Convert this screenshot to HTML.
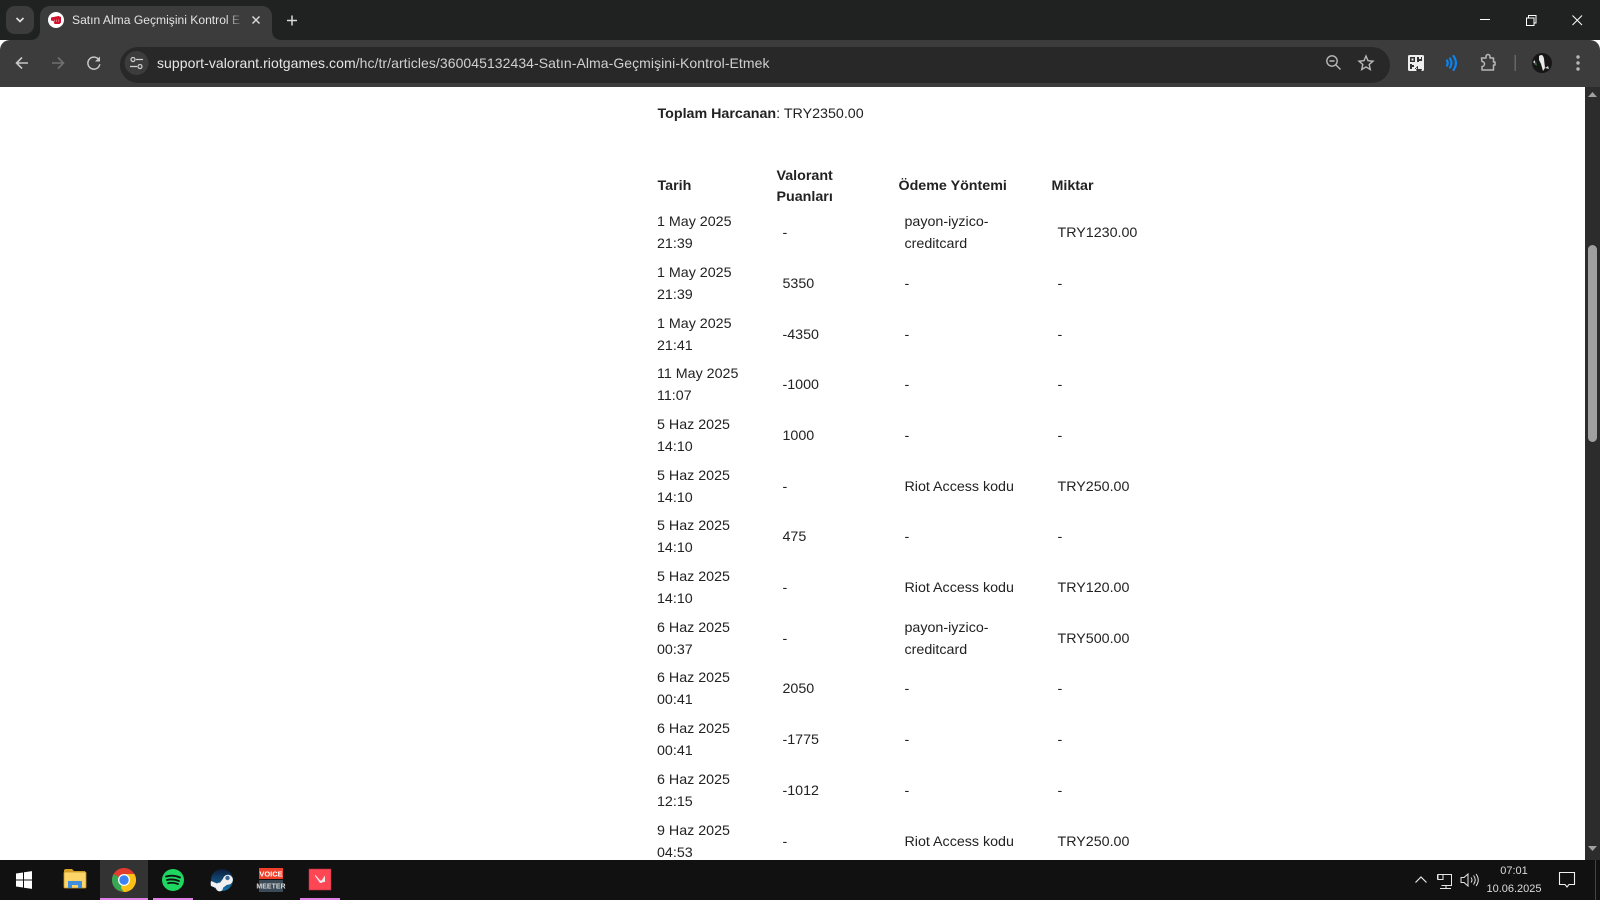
<!DOCTYPE html>
<html lang="tr"><head><meta charset="utf-8"><title>Satın Alma Geçmişini Kontrol Etmek</title>
<style>
html,body{margin:0;padding:0;width:1600px;height:900px;overflow:hidden;background:#fff;font-family:"Liberation Sans",sans-serif}
#top{position:absolute;left:0;top:0;width:1600px;height:40px;background:#202222}
#toolbar{position:absolute;left:0;top:40px;width:1600px;height:47px;background:#3c3c3c;border-radius:10px 10px 0 0}
#omni{position:absolute;left:120px;top:47px;width:1270px;height:36px;border-radius:18px;background:#282828}
#tab{position:absolute;left:40px;top:6px;width:232px;height:40px;background:#3c3c3c;border-radius:10px 10px 0 0}
#chev{position:absolute;left:6px;top:6px;width:28px;height:28px;border-radius:9px;background:#3c3c3c}
.t{position:absolute;white-space:nowrap}
#title{left:72px;top:12px;width:168px;overflow:hidden;font-size:12.1px;line-height:17px;color:#e3e3e3}
#fade{position:absolute;left:226px;top:10px;width:18px;height:20px;background:linear-gradient(90deg,rgba(60,60,60,0),#3c3c3c)}
#url{left:157px;top:53px;font-size:14px;line-height:20px;color:#e6e6e6;letter-spacing:.06px}
#url span{color:#d0d0d0}
#page{position:absolute;left:0;top:87px;width:1585px;height:773px;background:#fff;overflow:hidden}
#content{position:absolute;left:0;top:-85px;width:1585px;height:900px;font-size:14.28px;line-height:21.6px;color:#222}
.r{position:absolute;left:0;width:1585px;height:44px}
.r>div{position:absolute;white-space:nowrap}
.a{left:657px;top:0}.b{left:782.5px;top:11px}.c{left:904.5px;top:11px}.c2{left:904.5px;top:0}.d{left:1057.5px;top:11px}
.h{position:absolute;font-weight:700;white-space:nowrap}
#sb{position:absolute;left:1585px;top:87px;width:15px;height:773px;background:#2c2c2c}
#thumb{position:absolute;left:3px;top:158px;width:9px;height:197px;border-radius:5px;background:#a0a0a0}
#task{position:absolute;left:0;top:860px;width:1600px;height:40px;background:#111}
.ul{position:absolute;top:38px;height:2px;background:#e080e8}
#clock{position:absolute;left:1474px;top:2px;width:80px;text-align:center;font-size:11px;line-height:18px;color:#dcdcdc}
svg{position:absolute;overflow:visible}
</style></head><body>
<div id="top"></div>
<div id="chev"></div>
<svg style="left:0;top:0" width="40" height="40"><path d="M16.5 18l3.5 3.5 3.5-3.5" fill="none" stroke="#e3e3e3" stroke-width="1.6"/></svg>
<div id="tab"></div>
<div id="toolbar"></div>
<svg style="left:0;top:0" width="300" height="48"><path d="M30 40q10 0 10-10v10zM272 30q0 10 10 10h-10z" fill="#3c3c3c"/></svg>
<div id="omni"></div>
<svg style="left:48px;top:12px" width="16" height="16"><circle cx="8" cy="8" r="8" fill="#fff"/><path d="M3 5.500l7.500-1.500 2.500 1v5.500l-1.500 1.500h-5l-1-3-2.500-.5z" fill="#d0122c"/><path d="M6.500 7.500v2.500M8.500 7.500v2.500M10.500 7.500v2.500" stroke="#f4b8c0" stroke-width=".5"/></svg>
<div class="t" id="title">Satın Alma Geçmişini Kontrol Etmek</div><div id="fade"></div>
<svg style="left:0;top:0" width="320" height="40"><path d="M252.500 16.500l7 7M259.500 16.500l-7 7" stroke="#d8d8d8" stroke-width="1.500"/><path d="M292 15.500v10M287 20.500h10" stroke="#d8d8d8" stroke-width="1.500"/></svg>
<!-- window controls -->
<svg style="left:1470px;top:0" width="130" height="40"><path d="M10 19.500h10" stroke="#fff" stroke-width="1"/><path d="M56.500 18h7.500v7.500h-7.500zM58.500 18v-2.500h7.500v7.500h-2" fill="none" stroke="#fff" stroke-width="1"/><path d="M102.500 15.500l9.500 9.500M112 15.500l-9.500 9.500" stroke="#fff" stroke-width="1"/></svg>
<!-- nav -->
<svg style="left:0;top:40px" width="160" height="47">
<path d="M28 23H17M22 17.500L16.500 23l5.500 5.500" fill="none" stroke="#c7c7c7" stroke-width="1.600"/>
<path d="M52 23h11M58 17.500l5.500 5.500-5.500 5.500" fill="none" stroke="#707070" stroke-width="1.600"/>
<path d="M99 20a6 6 0 1 0 .8 4.200" fill="none" stroke="#c7c7c7" stroke-width="1.500"/><path d="M100 16.500v5h-5z" fill="#c7c7c7"/>
<circle cx="136.500" cy="23" r="12" fill="#3c3c3c"/>
<circle cx="133" cy="19.500" r="2" fill="none" stroke="#d0d0d0" stroke-width="1.200"/><path d="M136 19.500h7M130 26.500h7" stroke="#d0d0d0" stroke-width="1.200"/><circle cx="140" cy="26.500" r="2" fill="none" stroke="#d0d0d0" stroke-width="1.200"/>
</svg>
<div class="t" id="url">support-valorant.riotgames.com<span>/hc/tr/articles/360045132434-Satın-Alma-Geçmişini-Kontrol-Etmek</span></div>
<!-- toolbar right -->
<svg style="left:1320px;top:40px" width="280" height="47">
<circle cx="12" cy="21" r="5.200" fill="none" stroke="#b8b8b8" stroke-width="1.400"/><path d="M9.500 21h5M16 25l4.500 4.500" stroke="#b8b8b8" stroke-width="1.400"/>
<path d="M46 16l2 4.700 5 .5-3.800 3.300 1.100 5-4.300-2.600-4.300 2.600 1.100-5-3.800-3.300 5-.5z" fill="none" stroke="#b8b8b8" stroke-width="1.400"/>
<rect x="88" y="15" width="16" height="16" rx="1.500" fill="#eee"/>
<path d="M90 17h5v5h-5zM91.500 18.500h2v2h-2zM97 17h2v2h2v-2h1v4h-3v1h-2zM90 24h2v1h2v2h-2v2h-2zM95 28h2v1h-2zM98 26a3 3 0 1 0 4 3h-4z" fill="#333" fill-rule="evenodd"/>
<path d="M127 20.500q1.500 2.500 0 5M130 18.500q3 4.500 0 9M133.500 16q4.800 7 0 14" fill="none" stroke="#0a84f0" stroke-width="2.200" stroke-linecap="round"/>
<path d="M161.500 18h4.500v-1.500a2 2 0 0 1 4 0V18h3.500v4h1.500v3h-1.500v5h-11.500v-3.500a2.500 2.500 0 0 0 0-5z" fill="none" stroke="#b8b8b8" stroke-width="1.500" stroke-linejoin="round"/>
<rect x="194.500" y="15" width="1.500" height="16" fill="#666"/>
<circle cx="222" cy="23" r="10" fill="#161616"/><path d="M219 16q4-3 5 3l1 9-2 3-2-7-2-4z" fill="#e8e8e8"/><path d="M213 22l2-2v4zM225 28l3-2 1 3z" fill="#d0d0d0"/><path d="M214 24l2-3 1 5z" fill="#3a6a3a"/>
<circle cx="258" cy="17" r="1.700" fill="#b8b8b8"/><circle cx="258" cy="23" r="1.700" fill="#b8b8b8"/><circle cx="258" cy="29" r="1.700" fill="#b8b8b8"/>
</svg>
<!-- page -->
<div id="page"><div id="content">
<div class="h" style="left:657.5px;top:101.500px">Toplam Harcanan<span style="font-weight:400">: TRY2350.00</span></div>
<div class="h" style="left:657.500px;top:174px">Tarih</div>
<div class="h" style="left:776.500px;top:164px;line-height:21px">Valorant<br>Puanları</div>
<div class="h" style="left:898.500px;top:174px">Ödeme Yöntemi</div>
<div class="h" style="left:1051.500px;top:174px">Miktar</div>
<div class="r" style="top:210px"><div class="a">1 May 2025<br>21:39</div><div class="b">-</div><div class="c2">payon-iyzico-<br>creditcard</div><div class="d">TRY1230.00</div></div>
<div class="r" style="top:261px"><div class="a">1 May 2025<br>21:39</div><div class="b">5350</div><div class="c">-</div><div class="d">-</div></div>
<div class="r" style="top:312px"><div class="a">1 May 2025<br>21:41</div><div class="b">-4350</div><div class="c">-</div><div class="d">-</div></div>
<div class="r" style="top:362px"><div class="a">11 May 2025<br>11:07</div><div class="b">-1000</div><div class="c">-</div><div class="d">-</div></div>
<div class="r" style="top:413px"><div class="a">5 Haz 2025<br>14:10</div><div class="b">1000</div><div class="c">-</div><div class="d">-</div></div>
<div class="r" style="top:464px"><div class="a">5 Haz 2025<br>14:10</div><div class="b">-</div><div class="c">Riot Access kodu</div><div class="d">TRY250.00</div></div>
<div class="r" style="top:514px"><div class="a">5 Haz 2025<br>14:10</div><div class="b">475</div><div class="c">-</div><div class="d">-</div></div>
<div class="r" style="top:565px"><div class="a">5 Haz 2025<br>14:10</div><div class="b">-</div><div class="c">Riot Access kodu</div><div class="d">TRY120.00</div></div>
<div class="r" style="top:616px"><div class="a">6 Haz 2025<br>00:37</div><div class="b">-</div><div class="c2">payon-iyzico-<br>creditcard</div><div class="d">TRY500.00</div></div>
<div class="r" style="top:666px"><div class="a">6 Haz 2025<br>00:41</div><div class="b">2050</div><div class="c">-</div><div class="d">-</div></div>
<div class="r" style="top:717px"><div class="a">6 Haz 2025<br>00:41</div><div class="b">-1775</div><div class="c">-</div><div class="d">-</div></div>
<div class="r" style="top:768px"><div class="a">6 Haz 2025<br>12:15</div><div class="b">-1012</div><div class="c">-</div><div class="d">-</div></div>
<div class="r" style="top:819px"><div class="a">9 Haz 2025<br>04:53</div><div class="b">-</div><div class="c">Riot Access kodu</div><div class="d">TRY250.00</div></div>
</div></div>
<!-- scrollbar -->
<div id="sb"><div id="thumb"></div>
<svg style="left:0;top:0" width="15" height="773"><path d="M3 10l4.500-5 4.500 5zM3 759h9l-4.500 5z" fill="#a0a0a0"/></svg></div>
<!-- taskbar -->
<div id="task">
<div style="position:absolute;left:100px;top:0;width:48px;height:40px;background:#333"></div>
<div class="ul" style="left:100px;width:48px"></div><div class="ul" style="left:153px;width:40px"></div><div class="ul" style="left:300px;width:40px"></div>
<svg style="left:0;top:0" width="360" height="40">
<path d="M16 13.500l7-1v7h-7zM24 12.300l8-1.200v8.400h-8zM16 20.500h7v7l-7-1zM24 20.500h8v8.400l-8-1.200z" fill="#fff"/>
<path d="M64 11q0-2 2-2h6l2 2h11v5H64z" fill="#d9a227"/><rect x="64" y="12" width="22" height="16" rx="1" fill="#fcd468" stroke="#c8922a" stroke-width=".8"/><path d="M68 28v-7h14v7h-4v-3h-6v3z" fill="#3f8fe0"/>
<circle cx="124" cy="20" r="12" fill="#e33b2e"/><path d="M124 20L113.600 14a12 12 0 0 0 4.400 16.400L124 32z" fill="#34a853"/><path d="M124 14h10.400A12 12 0 0 1 124 32l-3-4z" fill="#fbc116"/><circle cx="124" cy="20" r="6" fill="#fff"/><circle cx="124" cy="20" r="4.700" fill="#3e82f1"/>
<circle cx="173" cy="20" r="11" fill="#1ed760"/><path d="M166 16.500q7-2 14 1M167 20q6-1.500 12 1M168 23.200q5-1.200 10 .8" fill="none" stroke="#111" stroke-width="1.800" stroke-linecap="round"/>
<circle cx="222" cy="20" r="11" fill="url(#st)"/><defs><linearGradient id="st" x1="0" y1="0" x2="0" y2="1"><stop offset="0" stop-color="#0e1c3c"/><stop offset="1" stop-color="#1276ac"/></linearGradient></defs>
<path d="M211 21l6 2.500a3.500 3.500 0 0 1 3-.8l3-4a5 5 0 1 1 4 6l-4 3a3.500 3.500 0 0 1-7 .3l-5-2a11 11 0 0 1 0-5z" fill="#f0f0f0"/><circle cx="227.500" cy="18" r="2.200" fill="#3c6a94"/>
<rect x="259" y="8" width="24" height="11" fill="#f0402c"/><rect x="259" y="20" width="24" height="12" fill="#3a4a56"/>
<text x="271" y="16.500" font-family="Liberation Sans" font-weight="700" font-size="7.500" fill="#fff" text-anchor="middle">VOICE</text>
<text x="271" y="28.500" font-family="Liberation Sans" font-weight="700" font-size="7" fill="#d8d8d8" text-anchor="middle">MEETER</text>
<rect x="309" y="9" width="22" height="21" fill="#ff4655" stroke="#b03040" stroke-width=".6"/><path d="M315 16l5 7h2.500L315 14.500zM325 15.500l-3.500 5h-2.500l1.300 1.700 4.700-.2z" fill="#f6e6e8"/>
</svg>
<svg style="left:1380px;top:0" width="220" height="40">
<path d="M35.500 22.500l5.500-5.500 5.500 5.500" fill="none" stroke="#e6e6e6" stroke-width="1.200"/>
<path d="M57.500 14.500h14v11h-10M57.500 14.500v5M58 14.500h5v5h-5zM66 25.500v3M60 28.500h11" fill="none" stroke="#e6e6e6" stroke-width="1"/>
<path d="M81 17.500h3l4-3.500v12l-4-3.500h-3zM91 17.500q2 2.500 0 5M93.500 15.500q3.500 4.500 0 9M96 14q4.500 6 0 12" fill="none" stroke="#e6e6e6" stroke-width="1"/>
<path d="M179.500 12.500h15v12h-5.500l-2 2.500-2-2.500h-5.500z" fill="none" stroke="#f0f0f0" stroke-width="1.100"/>
<path d="M215.500 0v40" stroke="#444" stroke-width="1"/>
</svg>
<div id="clock">07:01<br>10.06.2025</div>
</div>
</body></html>
